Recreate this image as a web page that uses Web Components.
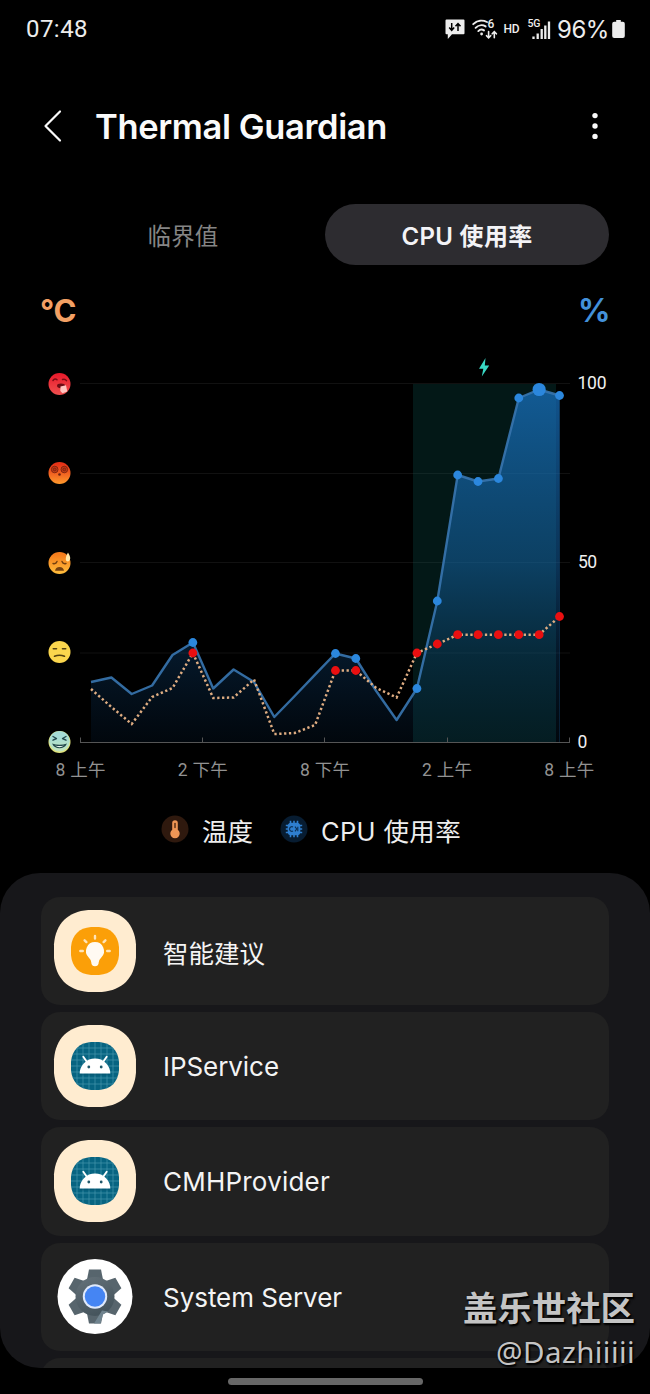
<!DOCTYPE html>
<html lang="zh-CN">
<head>
<meta charset="utf-8">
<title>Thermal Guardian</title>
<style>
    html, body {
        margin: 0;
        background: #000;
    }
    body {
        width: 650px;
        height: 1394px;
        overflow: hidden;
        color: #f5f5f5;
        font-family: Inter, "Noto Sans CJK SC", sans-serif;
    }
</style>
</head>
<body>
<phone-screen>
    <status-bar slot="status"></status-bar>
    <title-bar slot="title">Thermal Guardian</title-bar>
    <tab-switch slot="tabs">
        <tab-item><fit-text width="71">临界值</fit-text></tab-item>
        <tab-item selected><fit-text width="131">CPU 使用率</fit-text></tab-item>
    </tab-switch>
    <usage-chart slot="chart"></usage-chart>
    <chart-legend slot="legend"></chart-legend>
    <app-list slot="list">
        <app-row icon="bulb"><fit-text width="102">智能建议</fit-text></app-row>
        <app-row icon="android" latin><fit-text width="116">IPService</fit-text></app-row>
        <app-row icon="android" latin><fit-text width="167">CMHProvider</fit-text></app-row>
        <app-row icon="gear" latin><fit-text width="179">System Server</fit-text></app-row>
        <app-row></app-row>
    </app-list>
    <water-mark slot="mark"></water-mark>
</phone-screen>

<script>
function attach(el, html) {
    const template = document.createElement('template');
    template.innerHTML = html;
    el.attachShadow({ mode: 'open' });
    el.shadowRoot.appendChild(template.content.cloneNode(true));
}

// one line of text, tracked so that it fills the given width
class FitText extends HTMLElement {
    constructor() {
        super();
        attach(this, `
            <style>
                :host { display: inline-block; white-space: nowrap; }
                span { display: inline-block; }
            </style>
            <span><slot></slot></span>
        `);
    }

    connectedCallback() {
        requestAnimationFrame(() => this.fit());
        this.fit();
    }

    fit() {
        const span = this.shadowRoot.querySelector('span');
        const width = parseFloat(this.getAttribute('width'));
        const count = this.textContent.trim().length;
        span.style.letterSpacing = '0px';
        const natural = span.getBoundingClientRect().width;
        if (!natural || !count) return;
        span.style.letterSpacing = ((width - natural) / count) + 'px';
    }
}

class PhoneScreen extends HTMLElement {
    constructor() {
        super();
        attach(this, `
            <style>
                :host {
                    display: flex;
                    flex-direction: column;
                    position: relative;
                    width: 650px;
                    height: 1394px;
                    overflow: hidden;
                    background: #000;
                }
                .home {
                    width: 195px;
                    height: 7px;
                    margin: 10px auto 0;
                    border-radius: 4px;
                    background: #676767;
                }
            </style>
            <slot name="status"></slot>
            <slot name="title"></slot>
            <slot name="tabs"></slot>
            <slot name="chart"></slot>
            <slot name="legend"></slot>
            <slot name="list"></slot>
            <div class="home"></div>
            <slot name="mark"></slot>
        `);
    }
}

class StatusBar extends HTMLElement {
    constructor() {
        super();
        attach(this, `
            <style>
                :host {
                    display: flex;
                    align-items: center;
                    height: 58px;
                    padding: 0 25px 0 26px;
                    font: 400 24px/28px Roboto, sans-serif;
                    color: #ededed;
                }
                .icons { margin-left: auto; }
                .level { padding-top: 2px; font: 400 24px/28px Inter, sans-serif; }
                .battery { margin-left: 3px; }
                svg { display: block; }
            </style>
            <fit-text width="62">07:48</fit-text>
            <svg class="icons" width="113" height="28" viewBox="444 15 113 28">
                <path fill="#ededed" d="M446.5 19.5h17a1 1 0 0 1 1 1v12.8a1 1 0 0 1-1 1h-11.5l-4.2 4.8v-4.8h-1.3a1 1 0 0 1-1-1v-12.8a1 1 0 0 1 1-1z"/>
                <path fill="none" stroke="#000" stroke-width="1.5" d="M451.7 23v7M449.2 27.6l2.5 2.7 2.5-2.7M458 31v-7M455.5 26.2l2.5-2.7 2.5 2.7"/>
                <g fill="none" stroke="#ededed" stroke-width="1.9" stroke-linecap="round">
                    <path d="M473.2 24.2c4-4 9.6-4.3 13.8-2.2"/>
                    <path d="M475.6 27.8c2.8-2.8 7-3.2 10-1.4"/>
                    <path d="M478.3 31.1c1.7-1.7 4-1.9 5.7-.7"/>
                    <path stroke-width="1.6" d="M488.6 31.5v6M486.5 35.7l2.1 2.2 2.1-2.2M494.3 37.8v-6M492.2 33.8l2.1-2.2 2.1 2.2"/>
                </g>
                <circle cx="481.6" cy="34" r="1.4" fill="#ededed"/>
                <g fill="#ededed" font-family="Roboto, sans-serif" font-weight="500">
                    <text x="487.5" y="28.3" font-size="12">6</text>
                    <text x="503.5" y="33" font-size="12" textLength="16">HD</text>
                    <text x="527.4" y="27.3" font-size="10.5" textLength="13">5G</text>
                </g>
                <path stroke="#ededed" stroke-width="2.3" d="M533.5 39v-2.5M537.7 39v-5.5M541.7 39v-10M545.3 39v-13.5M549 39v-17.5"/>
            </svg>
            <fit-text class="level" width="52">96%</fit-text>
            <svg class="battery" width="13" height="20" viewBox="0 0 13 20">
                <path fill="#ededed" d="M4.2 1h4.6v1.7h2q2 0 2 2v12.3q0 2-2 2h-8.6q-2 0-2-2v-12.3q0-2 2-2h2z"/>
            </svg>
        `);
    }
}

class TitleBar extends HTMLElement {
    constructor() {
        super();
        attach(this, `
            <style>
                :host {
                    display: flex;
                    align-items: center;
                    height: 136px;
                    padding: 0 50px 0 43px;
                    margin-bottom: 10px;
                    color: #fafafa;
                }
                h1 { margin: 2px auto 0 33px; font: 600 34.5px/44px Inter, sans-serif; }
                svg { display: block; }
            </style>
            <svg width="19" height="34" viewBox="0 0 19 34">
                <path fill="none" stroke="#fafafa" stroke-width="2.2" stroke-linecap="round" stroke-linejoin="round" d="M17 2.5L2.5 17L17 31.5"/>
            </svg>
            <h1><fit-text width="292"></fit-text></h1>
            <svg width="10" height="28" viewBox="0 0 10 28" fill="#fafafa">
                <circle cx="5" cy="3.6" r="2.7"/><circle cx="5" cy="14" r="2.7"/><circle cx="5" cy="24.4" r="2.7"/>
            </svg>
        `);
        this.shadowRoot.querySelector('fit-text').textContent = this.textContent;
    }
}

class TabSwitch extends HTMLElement {
    constructor() {
        super();
        attach(this, `
            <style>
                :host {
                    display: grid;
                    grid-template-columns: 1fr 1fr;
                    height: 61px;
                    padding: 0 41px;
                }
            </style>
            <slot></slot>
        `);
    }
}

class TabItem extends HTMLElement {
    constructor() {
        super();
        attach(this, `
            <style>
                :host {
                    display: flex;
                    align-items: center;
                    justify-content: center;
                    padding-top: 4px;
                    box-sizing: border-box;
                    border-radius: 31px;
                    color: #858585;
                    font-size: 23.5px;
                    font-weight: 400;
                    line-height: 30px;
                }
                :host([selected]) {
                    background: #2d2c30;
                    color: #f3f3f6;
                    font-size: 24px;
                    font-weight: 600;
                }
            </style>
            <slot></slot>
        `);
    }
}

const X0 = 91;
const STEP = 20.37;
const CPU = [682, 677.5, 694, 685.5, 655, 642.5, 688.5, 669.5, 682, 717, 696, 674.7, 653.5, 658.5, 691, 720, 688.5, 601, 475, 481.5, 478.5, 398, 389.5, 395.5];
const TEMP = [689, 707, 724, 697, 688, 653, 698, 697.5, 679.5, 734, 733, 725, 670.5, 670.5, 688, 697.5, 653, 644, 634.7, 634.7, 634.7, 634.7, 634.7, 616.5];
// hours that get a marker on both lines
const DOTS = [5, 12, 13, 16, 17, 18, 19, 20, 21, 22, 23];

const px = i => X0 + i * STEP;
const line = ys => ys.map((y, i) => `${px(i).toFixed(1)},${y}`).join(' ');

class UsageChart extends HTMLElement {
    constructor() {
        super();
        const area = `${X0},742 ${line(CPU)} ${px(23).toFixed(1)},742`;
        const grid = [383.5, 473.5, 562.5, 653].map(y => `<path d="M80 ${y}H570"/>`).join('');
        const ticks = [80.5, 202.5, 324.5, 447.5, 569.5].map(x => `M${x} 742v-4.5`).join('');
        const hours = ['8 上午', '2 下午', '8 下午', '2 上午', '8 上午']
            .map((t, i) => `<text x="${55.5 + i * 122.2}" y="776" textLength="50">${t}</text>`).join('');
        const cpuDots = DOTS.map(i => `<circle cx="${px(i)}" cy="${CPU[i]}" r="${i === 22 ? 6.6 : 4.4}"/>`).join('');
        const tempDots = DOTS.map(i => `<circle cx="${px(i)}" cy="${TEMP[i]}" r="4.4"/>`).join('');

        attach(this, `
            <style>
                :host { display: block; height: 525px; }
                .units {
                    display: flex;
                    justify-content: space-between;
                    height: 80px;
                    padding: 26px 41px 0 40px;
                    box-sizing: border-box;
                    font: 700 31px/40px Inter, sans-serif;
                }
                .c { color: #f3a064; }
                .p { color: #4391da; font-size: 32px; }
                svg { display: block; }
            </style>
            <div class="units"><fit-text class="c" width="36">°C</fit-text><fit-text class="p" width="31">%</fit-text></div>
            <svg width="650" height="445" viewBox="0 345 650 445">
                <defs>
                    <linearGradient id="fill" gradientUnits="userSpaceOnUse" x1="0" y1="389" x2="0" y2="742">
                        <stop offset="0" stop-color="#1874c4" stop-opacity=".72"/>
                        <stop offset=".5" stop-color="#1567ad" stop-opacity=".5"/>
                        <stop offset=".75" stop-color="#125da0" stop-opacity=".26"/>
                        <stop offset="1" stop-color="#104f90" stop-opacity=".09"/>
                    </linearGradient>
                    <linearGradient id="f1" x1="0" y1="0" x2="0" y2="1"><stop offset="0" stop-color="#e8192a"/><stop offset="1" stop-color="#f0504f"/></linearGradient>
                    <linearGradient id="f2" x1="0" y1="0" x2="0" y2="1"><stop offset=".1" stop-color="#e63217"/><stop offset="1" stop-color="#ff9a2c"/></linearGradient>
                    <linearGradient id="f3" x1="0" y1="0" x2="0" y2="1"><stop offset=".1" stop-color="#f57c1c"/><stop offset="1" stop-color="#ffbe3c"/></linearGradient>
                    <linearGradient id="f5" x1="0" y1="0" x2="0" y2="1"><stop offset=".3" stop-color="#a5dcd6"/><stop offset="1" stop-color="#c3e5bd"/></linearGradient>
                </defs>

                <g stroke="#fff" stroke-opacity=".065">${grid}</g>
                <rect x="413" y="384" width="143" height="358" fill="#117f7a" fill-opacity=".19"/>
                <polygon points="${area}" fill="url(#fill)"/>
                <path d="M80 742.5H570${ticks}" fill="none" stroke="#555"/>
                <path d="M559.5 397V742" stroke="#1c70b8" stroke-opacity=".25"/>
                <polyline points="${line(CPU)}" fill="none" stroke="#3774ae" stroke-opacity=".92" stroke-width="2.4" stroke-linejoin="round"/>
                <polyline points="${line(TEMP)}" fill="none" stroke="#dfad82" stroke-width="2.5" stroke-dasharray="2.3 2.55"/>
                <g fill="#2b87dd">${cpuDots}</g>
                <g fill="#e90f10">${tempDots}</g>
                <path fill="#38d8c4" d="M485.5 358l-6.5 10.8h4.3l-1.5 7.7 7.4-11h-4.400z"/>

                <g transform="translate(59.5 384)">
                    <circle r="11" fill="url(#f1)"/>
                    <path fill="none" stroke="#7d0b14" stroke-width="1.5" stroke-linecap="round" d="M-6.5-3.5q2-2.5 4-.8M3-4.5q2.5-1 4 1.2"/>
                    <ellipse cx="1.5" cy="1.8" rx="4" ry="2.4" fill="#6d0b14"/>
                    <path fill="#ffc5c0" d="M1 2.5l5.5-1.2 1.3 6.2-4.8 1.7-2.2-2.3z"/>
                </g>
                <g transform="translate(59.5 473)">
                    <circle r="11" fill="url(#f2)"/>
                    <g fill="#a52a12" fill-opacity=".5" stroke="#7a2410" stroke-width=".9">
                        <circle cx="-4.8" cy="-3.5" r="3.3"/><circle cx="-4.8" cy="-3.5" r="1.4"/>
                        <circle cx="4.8" cy="-3.5" r="3.3"/><circle cx="4.8" cy="-3.5" r="1.4"/>
                    </g>
                    <circle cy="1.5" r="1.3" fill="#6b2110"/>
                </g>
                <g transform="translate(59.5 563)">
                    <circle r="11" fill="url(#f3)"/>
                    <path fill="none" stroke="#74400f" stroke-width="1.4" stroke-linecap="round" d="M-6.5 .5q3 .8 4-2M6.5 .5q-3 .8-4-2"/>
                    <path fill="#74400f" d="M-4.5 7.8q.5-3.8 4.5-3.8t4.5 3.8z"/>
                    <path fill="#ffe9ad" d="M8.5-10.5q3.2 5 1.8 7.5t-3.8 .5q-1-3 2-8z"/>
                </g>
                <g transform="translate(59.5 652)">
                    <circle r="11" fill="#fbd64d"/>
                    <path fill="none" stroke="#554210" stroke-width="1.6" stroke-linecap="round" d="M-6.2-3.2h3.2M3-3.2h3.2M-5 4.2q5-1.8 10 0"/>
                </g>
                <g transform="translate(59.5 742)">
                    <circle r="11" fill="#dfe27c"/>
                    <circle cy="-.7" r="10.3" fill="url(#f5)"/>
                    <path fill="none" stroke="#23494c" stroke-width="1.4" stroke-linecap="round" stroke-linejoin="round" d="M-6.5-5.5l3.5 2-3.5 1.7M6.5-5.5l-3.5 2 3.5 1.7"/>
                    <path fill="#23494c" d="M-7.5 1.5q7.500 2.400 15 0q-2.200 4.800-7.500 4.800t-7.500-4.800z"/>
                    <path fill="#e8f6ee" d="M-4.5 3.5q4.5 1 9 0q-2 1.700-4.5 1.700t-4.500-1.700z"/>
                </g>

                <g font-family='Roboto, "Noto Sans CJK SC", sans-serif' font-size="17.5" fill="#f0f0f0">
                    <text x="577.5" y="389" textLength="29">100</text>
                    <text x="578" y="568" textLength="19">50</text>
                    <text x="577.5" y="747.5">0</text>
                </g>
                <g font-family='Roboto, "Noto Sans CJK SC", sans-serif' font-size="17.5" fill="#929292">${hours}</g>
            </svg>
        `);
    }
}

class ChartLegend extends HTMLElement {
    constructor() {
        super();
        const pins = [-3.5, 0, 3.5].map(n => `M${n}-8.2V8.2M-8.2 ${n}H8.2`).join('');
        attach(this, `
            <style>
                :host {
                    display: flex;
                    align-items: center;
                    height: 83px;
                    padding: 0 0 0 161px;
                    font-size: 25.5px;
                    line-height: 34px;
                    color: #eee;
                }
                svg { display: block; margin-bottom: 6px; }
                .temp { margin: 0 27px 0 13px; }
                .cpu { margin-left: 13px; }
            </style>
            <svg width="28" height="28" viewBox="-14 -14 28 28">
                <circle r="13.5" fill="#2f190e"/>
                <path fill="#ef9656" d="M-2.8-6a2.8 2.8 0 0 1 5.6 0v6.7a4.7 4.7 0 1 1-5.6 0z"/>
                <path stroke="#5b2f15" stroke-width="1.5" stroke-linecap="round" d="M0-5.5v4"/>
            </svg>
            <fit-text class="temp" width="51">温度</fit-text>
            <svg width="28" height="28" viewBox="-14 -14 28 28">
                <circle r="13.5" fill="#071c31"/>
                <rect x="-6.3" y="-6.3" width="12.6" height="12.6" rx="3.5" fill="#2f7fd0"/>
                <path stroke="#2f7fd0" stroke-width="1.6" d="${pins}"/>
                <path fill="none" stroke="#0b3055" stroke-width="1.1" d="M-1-2a2.3 2.3 0 1 0 0 4M1-2.3l1.7 2.3-1.7 2.300M3.8-2.3v4.6"/>
            </svg>
            <fit-text class="cpu" width="140">CPU 使用率</fit-text>
        `);
    }
}

class AppList extends HTMLElement {
    constructor() {
        super();
        attach(this, `
            <style>
                :host {
                    display: flex;
                    flex-direction: column;
                    gap: 7px;
                    height: 495px;
                    padding: 24px 41px 0;
                    box-sizing: border-box;
                    overflow: hidden;
                    border-radius: 40px;
                    background: #17171a;
                }
            </style>
            <slot></slot>
        `);
    }
}

const GRID = [6, 12, 18, 24, 30, 36, 42].map(n => `M${n} 0V48M0 ${n}H48`).join('');
const TEETH = [0, 60, 120, 180, 240, 300].map(a => `<path transform="rotate(${a})" d="M-8-17l2-10h12l2 10z"/>`).join('');
const SQUIRCLE = 'M20 0H28C40 1 47 8 48 20V28C47 40 40 47 28 48H20C8 47 1 40 0 28V20C1 8 8 1 20 0z';

const ICONS = {
    bulb: `
        <path transform="scale(1.708)" fill="#ffecd0" d="${SQUIRCLE}"/>
        <g transform="translate(17 17)">
            <path fill="#fb9f08" d="${SQUIRCLE}"/>
            <path fill="#fffaf2" d="M24 15a9 9 0 0 1 6.5 15.2q-2.2 2-2.8 5.3a3.7 3.7 0 0 1-7.4 0q-.6-3.3-2.8-5.3A9 9 0 0 1 24 15z"/>
            <path stroke="#ffe4b8" stroke-width="2.4" stroke-linecap="round" d="M24 9v2.5M13.6 13.3l1.8 1.8M34.4 13.3l-1.8 1.8M9.3 24h2.5M38.7 24h-2.5"/>
        </g>`,
    android: `
        <path transform="scale(1.708)" fill="#ffecd0" d="${SQUIRCLE}"/>
        <g transform="translate(17 17)">
            <clipPath id="clip"><path d="${SQUIRCLE}"/></clipPath>
            <path fill="#076481" d="${SQUIRCLE}"/>
            <path clip-path="url(#clip)" stroke="#4695ae" stroke-width=".7" d="${GRID}"/>
            <path fill="#04506b" d="M9 31.5h30v2h-30z" opacity=".5"/>
            <path stroke="#fff" stroke-width="1.9" stroke-linecap="round" d="M12.3 14.8l3.5 5M35.7 14.8l-3.5 5"/>
            <path fill="#fff" d="M8.7 31.5a15.3 15 0 0 1 30.6 0z"/>
            <circle cx="17.8" cy="25" r="1.4" fill="#20586a"/><circle cx="30.2" cy="25" r="1.4" fill="#20586a"/>
        </g>`,
    gear: `
        <g transform="translate(41 40.5)">
            <defs>
                <linearGradient id="steel" x1="0" y1="0" x2=".4" y2="1"><stop offset="0" stop-color="#65727a"/><stop offset="1" stop-color="#46555d"/></linearGradient>
            </defs>
            <circle r="37.5" fill="#fff"/>
            <g fill="#57656d">${TEETH}</g>
            <circle r="19.5" fill="url(#steel)"/>
            <path fill="#70848f" d="M7 14L-1 27H5.5l2.5-9 5-3z"/>
            <circle r="12.2" fill="#dfe9fb"/>
            <circle r="10.2" fill="#4585f3"/>
        </g>`
};

class AppRow extends HTMLElement {
    constructor() {
        super();
        attach(this, `
            <style>
                :host {
                    display: flex;
                    align-items: center;
                    flex: none;
                    gap: 27px;
                    height: 108.2px;
                    padding-left: 13px;
                    box-sizing: border-box;
                    border-radius: 19px;
                    background: #212121;
                    color: #f4f4f4;
                    font-size: 25.5px;
                    line-height: 34px;
                }
                svg { display: block; overflow: visible; }
                .name { padding-top: 5px; }
                :host([latin]) .name { padding-top: 2px; font-size: 26px; }
            </style>
            <svg width="82" height="82" viewBox="0 0 82 82">${ICONS[this.getAttribute('icon')] || ''}</svg>
            <div class="name"><slot></slot></div>
        `);
    }
}

class WaterMark extends HTMLElement {
    constructor() {
        super();
        attach(this, `
            <style>
                :host {
                    display: flex;
                    flex-direction: column;
                    align-items: flex-end;
                    position: absolute;
                    right: 15px;
                    bottom: 20px;
                    color: #c4c4c4;
                    text-shadow: 1px 1px 2px #000, 1px 2px 2px #000;
                }
                .site { margin-bottom: 2px; font: 700 34.5px/44px "Noto Sans CJK SC", sans-serif; }
                .user { font: 400 29.5px/44px "Noto Sans", sans-serif; }
            </style>
            <fit-text class="site" width="172">盖乐世社区</fit-text>
            <fit-text class="user" width="139">@Dazhiiiii</fit-text>
        `);
    }
}

customElements.define('fit-text', FitText);
customElements.define('phone-screen', PhoneScreen);
customElements.define('status-bar', StatusBar);
customElements.define('title-bar', TitleBar);
customElements.define('tab-switch', TabSwitch);
customElements.define('tab-item', TabItem);
customElements.define('usage-chart', UsageChart);
customElements.define('chart-legend', ChartLegend);
customElements.define('app-list', AppList);
customElements.define('app-row', AppRow);
customElements.define('water-mark', WaterMark);
</script>
</body>
</html>
